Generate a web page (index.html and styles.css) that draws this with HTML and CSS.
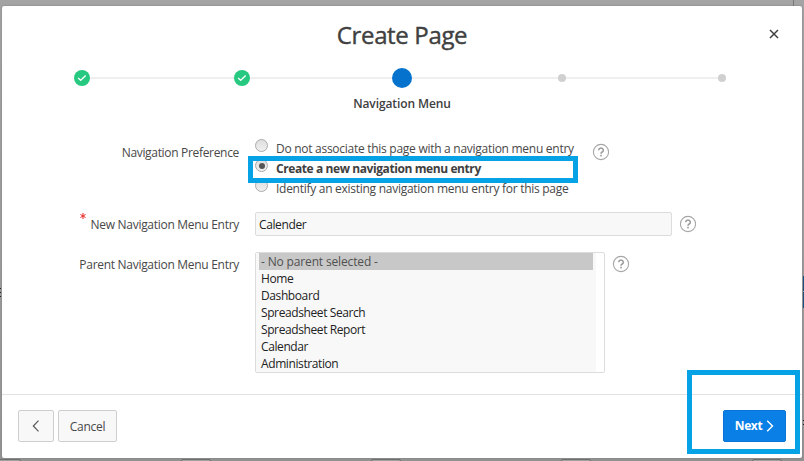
FILE: index.html
```html
<!DOCTYPE html>
<html lang="en">
<head>
<meta charset="utf-8">
<title>Create Page</title>
<link rel="stylesheet" href="styles.css">
</head>
<body>
<svg width="0" height="0" class="defs">
  <symbol id="help" viewBox="0 0 18 18"><circle cx="9" cy="9" r="7.6" fill="none" stroke="#a6a6a6" stroke-width="1.1"/><path d="M6.7 7.2a2.3 2.1 0 1 1 3.5 1.8Q9 9.7 9 10.7" fill="none" stroke="#999" stroke-width="1.5"/><rect x="8.2" y="11.8" width="1.6" height="1.6" fill="#999"/></symbol>
  <symbol id="done" viewBox="0 0 16 16"><circle cx="8" cy="8" r="8" fill="#26c97f"/><path d="M4.1 7.9l2.6 2.4 5-4.8" fill="none" stroke="#fff" stroke-width="1.3"/></symbol>
</svg>
<i class="mark bar"></i><i class="mark blue"></i><i class="mark blue two"></i><i class="mark dots"></i><i class="mark dots right"></i>
<i class="mark tab t1"></i><i class="mark tab t2"></i><i class="mark tab t3"></i><i class="mark tab t4"></i><i class="mark tab t5"></i>
<main class="dialog">
  <header class="head">
    <h1>Create Page</h1>
    <button class="close" aria-label="Close"><svg width="10" height="10" viewBox="0 0 10 10"><path d="M1 1l8 8M9 1L1 9" stroke="#404040" stroke-width="1.5"/></svg></button>
  </header>
  <div class="steps">
    <span class="step"><svg width="16" height="16"><use href="#done"/></svg></span>
    <span class="step"><svg width="16" height="16"><use href="#done"/></svg></span>
    <span class="step"><b class="current"></b></span>
    <span class="step"><b class="todo"></b></span>
    <span class="step"><b class="todo"></b></span>
  </div>
  <div class="step-label"><span>Navigation Menu</span></div>
  <section class="form">
    <div class="row prefs">
      <span class="label"><span class="l1">Navigation Preference</span></span>
      <div class="radios">
        <div class="option"><i class="radio"></i><span class="r1">Do not associate this page with a navigation menu entry</span></div>
        <div class="option"><i class="radio on"></i><span class="r2">Create a new navigation menu entry</span></div>
        <div class="option"><i class="radio"></i><span class="r3">Identify an existing navigation menu entry for this page</span></div>
        <div class="highlight choice"></div>
      </div>
      <svg class="help" width="18" height="18"><use href="#help"/></svg>
    </div>
    <div class="row entry">
      <span class="label"><svg class="required" width="6" height="6" viewBox="0 0 6 6"><path d="M3 0v6M.4 1.5l5.2 3M5.6 1.5l-5.2 3" stroke="#e8302e"/></svg><span class="l2">New Navigation Menu Entry</span></span>
      <div class="input"><span class="v">Calender</span></div>
      <svg class="help" width="18" height="18"><use href="#help"/></svg>
    </div>
    <div class="row parent">
      <span class="label"><span class="l3">Parent Navigation Menu Entry</span></span>
      <div class="list"><div class="items">
        <div class="item selected"><span>- No parent selected -</span></div>
        <div class="item"><span>Home</span></div>
        <div class="item"><span>Dashboard</span></div>
        <div class="item"><span>Spreadsheet Search</span></div>
        <div class="item"><span>Spreadsheet Report</span></div>
        <div class="item"><span>Calendar</span></div>
        <div class="item"><span>Administration</span></div>
      </div></div>
      <svg class="help" width="18" height="18"><use href="#help"/></svg>
    </div>
  </section>
  <footer class="foot">
    <button class="btn back" aria-label="Back"><svg width="8" height="12" viewBox="0 0 8 12"><path d="M6.5 .7L1.3 6l5.2 5.3" fill="none" stroke="#505050" stroke-width="1.1"/></svg></button>
    <button class="btn cancel"><span>Cancel</span></button>
    <button class="btn next"><span>Next</span><svg width="8" height="12" viewBox="0 0 8 12"><path d="M1.2 .7L6.5 6l-5.3 5.3" fill="none" stroke="#fff" stroke-width="1.4"/></svg></button>
    <div class="highlight action"></div>
  </footer>
</main>
</body>
</html>
```

FILE: styles.css
```css
* { box-sizing: border-box; }
body { margin: 0; width: 804px; height: 461px; overflow: hidden; position: relative; padding: 6px 2px 3px; background: linear-gradient(#a4a4a4, #979797 94%, #929292); font: 12px/18px "Open Sans", "Noto Sans", sans-serif; color: #484848; }
.defs { position: absolute; }
span { white-space: nowrap; }
button { font: inherit; color: inherit; padding: 0; margin: 0; border: 0; background: none; }
.dialog { position: relative; width: 800px; height: 452px; background: #fff; border-radius: 2px; box-shadow: 0 0 2px #777; display: flex; flex-direction: column; }
.head { height: 62px; display: flex; justify-content: center; position: relative; }
h1 { margin: 11px 0 0; font-size: 24px; line-height: 36px; font-weight: 400; letter-spacing: -.35px; color: #404040; -webkit-text-stroke: .4px #404040; }
.close { position: absolute; left: 767px; top: 23px; width: 10px; height: 10px; display: flex; }
.steps { height: 20px; display: grid; grid-template-columns: repeat(5, 160px); }
.step { display: flex; align-items: center; justify-content: center; position: relative; }
.step + .step::before { content: ""; position: absolute; left: -80px; width: 160px; height: 2px; background: #efefef; z-index: 0; }
.step svg, .step b { position: relative; z-index: 1; }
.current { width: 20px; height: 20px; border-radius: 50%; background: #0572ce; }
.todo { width: 8px; height: 8px; border-radius: 50%; background: #d0d0d0; }
.step-label { margin-top: 7px; text-align: center; font-weight: 600; letter-spacing: -.1px; color: #404040; }
.form { flex: 1; padding-top: 20px; }
.row { display: flex; }
.prefs { height: 79px; }
.entry { height: 40px; }
.label { width: 237px; margin-right: 16px; display: flex; justify-content: flex-end; align-items: flex-start; padding-top: 4px; letter-spacing: -.29px; }
.prefs .label { padding-top: 11px; letter-spacing: -.32px; }
.radios { width: 330px; position: relative; padding-top: 6px; }
.option { height: 20px; display: flex; gap: 8px; line-height: 20px; letter-spacing: -.275px; }
.radio { width: 13px; height: 13px; border: 1px solid #aaa; border-radius: 50%; background: linear-gradient(#dedede, #f0f0f0); display: flex; align-items: center; justify-content: center; flex: none; }
.radio.on::after { content: ""; width: 6px; height: 6px; border-radius: 50%; background: #555; }
.r2 { font-weight: 700; letter-spacing: -.41px; color: #404040; }
.highlight { position: absolute; border: 5px solid #05a3e5; }
.choice { left: -7px; top: 23px; width: 330px; height: 27px; }
.help { flex: none; margin-left: 7px; margin-top: 3px; }
.prefs .help { margin-top: 10px; }
.required { margin: -3px 5px 0 0; }
.input { width: 417px; height: 24px; border: 1px solid #dcdcdc; border-radius: 2px; background: #f8f8f8; color: #222; padding: 3px; letter-spacing: -.38px; }
.list { width: 350px; height: 121px; border: 1px solid #dcdcdc; border-radius: 2px; color: #222; }
.items { width: 340px; height: 119px; padding: 0 3px; background: #f8f8f8; }
.item { height: 17px; line-height: 18px; padding-left: 2px; letter-spacing: -.4px; }
.selected { background: #c8c8c8; color: #505050; letter-spacing: -.15px; }
.foot { height: 64px; border-top: 1px solid #e2e2e2; position: relative; display: flex; padding: 15px 16px 0; }
.btn { height: 32px; border: 1px solid #cfcfcf; border-radius: 2px; background: #f8f8f8; display: flex; align-items: center; justify-content: center; }
.back { width: 36px; margin-right: 4px; }
.cancel { width: 59px; letter-spacing: -.3px; padding-top: 1px; }
.next { width: 63px; margin-left: auto; gap: 4px; background: #0a7fe6; border-color: #0a75d6; color: #fff; font-weight: 700; letter-spacing: -.4px; }
.action { left: 685px; top: -25px; width: 113px; height: 84px; }
.mark { position: absolute; background: #777; }
.bar { left: 793px; top: 0; width: 1px; height: 6px; }
.blue { left: 803px; top: 276px; width: 1px; height: 15px; background: #174d7c; }
.two { top: 292px; height: 16px; }
.dots { left: 0; top: 288px; width: 1px; height: 10px; background: repeating-linear-gradient(#222 0 1px, transparent 1px 4px); }
.right { left: 803px; top: 420px; height: 6px; }
.tab { top: 459px; width: 30px; height: 3px; border: 1px solid #6e6e6e; background: #a0a0a0; border-radius: 2px 2px 0 0; }
.t1 { left: -9px; } .t2 { left: 181px; } .t3 { left: 371px; } .t4 { left: 561px; } .t5 { left: 752px; }
```
